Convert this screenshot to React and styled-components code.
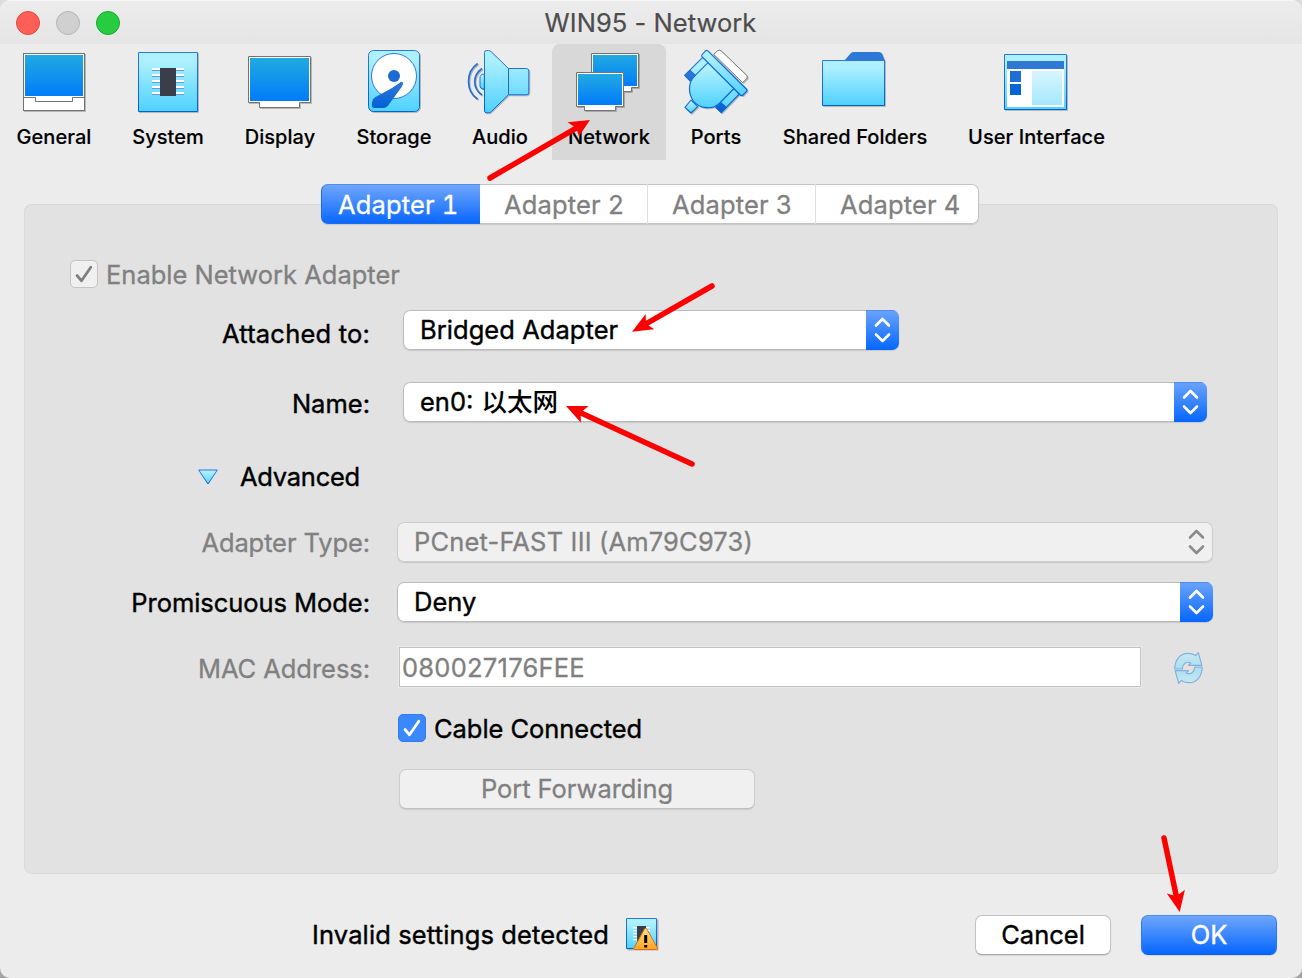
import React from "react";
import styled, { createGlobalStyle, css } from "styled-components";

const GlobalStyle = createGlobalStyle`
  * { box-sizing: border-box; }
  body {
    margin: 0;
    background: linear-gradient(#dcdcdc, #a2a2a2);
    font-family: Inter, "Noto Sans CJK SC", sans-serif;
  }
`;

const Window = styled.main`
  position: relative;
  display: flex;
  flex-direction: column;
  width: 1302px;
  height: 978px;
  overflow: hidden;
  border-radius: 10px;
  background: #ececec;
  color: #000;
  font-size: 25.5px;
  line-height: 32px;
  white-space: nowrap;
`;

const TitleBar = styled.header`
  display: grid;
  grid-template-columns: 1fr auto 1fr;
  align-items: center;
  height: 44px;
  padding: 1px 16px 0;
  border-top: 1px solid #f4f4f4;
  background: linear-gradient(#ececec, #e5e5e5);
`;

const Lights = styled.div`
  display: flex;
  gap: 16px;
`;

const Light = styled.span`
  width: 24px;
  height: 24px;
  border: 1px solid ${(p) => p.$edge};
  border-radius: 50%;
  background: ${(p) => p.$fill};
`;

const Title = styled.h1`
  margin: 0 1px 0 0;
  color: #4d4d4d;
  font-size: 25.5px;
  font-weight: 400;
  letter-spacing: 0.05px;
  -webkit-text-stroke: 0.2px;
`;

const Toolbar = styled.nav`
  display: flex;
  height: 116px;
`;

const Tool = styled.div`
  display: flex;
  flex-direction: column;
  align-items: center;
  width: ${(p) => p.$width}px;
  height: 116px;
  margin-left: ${(p) => p.$lead || 0}px;
  padding-top: 6px;
  border-radius: 8px 8px 0 0;
  background: ${(p) => (p.$active ? "#d8d8d8" : "transparent")};
`;

const ToolIcon = styled.svg`
  width: 64px;
  height: 64px;
  overflow: visible;
  filter: drop-shadow(1px 1px 0 rgba(0, 0, 0, 0.22));
`;

const ToolLabel = styled.span`
  margin-top: 11px;
  font-size: 20px;
  font-weight: 500;
  line-height: 24px;
  letter-spacing: 0.05px;
  -webkit-text-stroke: 0.15px;
`;

const Tabs = styled.div`
  z-index: 1;
  display: flex;
  align-self: flex-start;
  width: 658px;
  height: 40px;
  margin: 24px 0 -20px 321px;
  border-radius: 7px;
  background: #fff;
  box-shadow: inset 0 0 0 1px #c4c4c4, 0 1px 1px rgba(0, 0, 0, 0.12);
`;

const Tab = styled.div`
  display: flex;
  align-items: center;
  flex: none;
  width: ${(p) => p.$width}px;
  padding: 2px 0 0 ${(p) => p.$inset}px;
  border-left: 1px solid ${(p) => (p.$line ? "#e0e0e0" : "transparent")};
  color: #808080;
  font-feature-settings: "tnum";
  letter-spacing: 0.15px;
  -webkit-text-stroke: 0.3px;
  ${(p) =>
    p.$active &&
    css`
      border: 1px solid #1a6cf0;
      border-top-color: #4a8cf0;
      border-right: 0;
      border-radius: 7px 0 0 7px;
      background: linear-gradient(#6ea6fb, #0a67ff);
      color: #fff;
    `}
`;

const Panel = styled.section`
  width: 1254px;
  height: 670px;
  margin-left: 24px;
  padding-top: 56px;
  border-radius: 8px;
  background: #e2e2e2;
  box-shadow: inset 0 0 0 1px #dadada;
`;

const Row = styled.div`
  display: grid;
  grid-template-columns: 346px auto;
  justify-content: start;
  height: 40px;
  margin-top: ${(p) => p.$gap}px;
`;

const Label = styled.label`
  padding-top: ${(p) => 4 + (p.$drop || 0)}px;
  color: ${(p) => (p.$dim ? "#808080" : "#000")};
  text-align: right;
  letter-spacing: ${(p) => p.$track || 0}px;
  -webkit-text-stroke: ${(p) => (p.$dim ? 0.3 : 0.4)}px;
`;

const Combo = styled.div`
  display: flex;
  justify-content: space-between;
  width: ${(p) => p.$width}px;
  height: 40px;
  margin-left: ${(p) => p.$indent}px;
  overflow: hidden;
  border-radius: 7px;
  background: ${(p) => (p.$dim ? "#f0f0f0" : "#fff")};
  box-shadow: inset 0 0 0 1px ${(p) => (p.$dim ? "#cdcdcd" : "#bcbcbc")},
    0 1px 1px rgba(0, 0, 0, 0.12);
  color: ${(p) => (p.$dim ? "#808080" : "#000")};
`;

const ComboText = styled.span`
  padding: 4px 0 0 17px;
  letter-spacing: ${(p) => p.$track || 0}px;
  -webkit-text-stroke: ${(p) => (p.$dim ? 0.3 : 0.4)}px;
`;

const Han = styled.span`
  margin-left: 1px;
  font-family: "Noto Sans CJK SC", sans-serif;
  font-size: 25.5px;
  font-weight: 500;
  line-height: 20px;
  -webkit-text-stroke: 0;
`;

const Stepper = styled.svg`
  flex: none;
  width: 33px;
  height: 40px;
  background: ${(p) => (p.$dim ? "none" : "linear-gradient(#6ba4fb, #0566ff)")};
  box-shadow: ${(p) => (p.$dim ? "none" : "inset 0 1px 0 #4a8cf0")};
  color: ${(p) => (p.$dim ? "#8c8c8c" : "#fff")};
`;

const CheckRow = styled.div`
  display: flex;
  align-items: center;
  gap: 8px;
  height: 28px;
  margin-left: ${(p) => p.$indent}px;
  margin-top: ${(p) => p.$gap || 0}px;
  color: ${(p) => (p.$dim ? "#808080" : "#000")};
  -webkit-text-stroke: ${(p) => (p.$dim ? 0.3 : 0.4)}px;
`;

const CheckBox = styled.svg`
  width: 28px;
  height: 28px;
  border: 1px solid ${(p) => (p.$dim ? "#c4c4c4" : "#2f7cf6")};
  border-radius: 5px;
  background: ${(p) => (p.$dim ? "#f0f0f0" : "#3b88fd")};
  color: ${(p) => (p.$dim ? "#808080" : "#fff")};
`;

const CheckText = styled.span`
  padding-top: 2px;
  letter-spacing: ${(p) => p.$track || 0}px;
`;

const Disclosure = styled.div`
  display: flex;
  align-items: center;
  height: 40px;
  margin: 35px 0 0 174px;
  letter-spacing: -0.25px;
  -webkit-text-stroke: 0.4px;
`;

const DisclosureIcon = styled.svg`
  width: 20px;
  height: 16px;
  margin-right: 22px;
  overflow: visible;
`;

const MacField = styled.div`
  display: flex;
  align-items: center;
  gap: 33px;
  margin-left: 29px;
`;

const Field = styled.div`
  width: 742px;
  height: 40px;
  padding: 4px 0 0 2px;
  border: 1px solid #c2c2c2;
  background: #fff;
  box-shadow: 0 0 0 1px #ebebeb;
  color: #808080;
  letter-spacing: 0.25px;
  -webkit-text-stroke: 0.3px;
`;

const RefreshIcon = styled.svg`
  width: 29px;
  height: 32px;
  margin-top: 2px;
  overflow: visible;
`;

const Button = styled.div`
  display: flex;
  align-items: center;
  justify-content: center;
  width: ${(p) => p.$width}px;
  height: 40px;
  border: 1px solid #c2c2c2;
  border-bottom-color: #a8a8a8;
  border-radius: 7px;
  background: #fff;
  box-shadow: 0 1px 1px rgba(0, 0, 0, 0.1);
  -webkit-text-stroke: 0.4px;
  ${(p) =>
    p.$dim &&
    css`
      margin: 27px 0 0 375px;
      border-color: #cdcdcd;
      border-bottom-color: #bfbfbf;
      background: #f0f0f0;
      color: #808080;
      letter-spacing: -0.05px;
      -webkit-text-stroke: 0.3px;
    `}
  ${(p) =>
    p.$primary &&
    css`
      border-color: #4a8cf0 #2b79f2 #0a60ee;
      background: linear-gradient(#6ea6fb, #0566ff);
      color: #fff;
    `}
`;

const Footer = styled.footer`
  display: flex;
  align-items: center;
  height: 40px;
  margin: 41px 25px 0 312px;
`;

const Warning = styled.span`
  letter-spacing: 0.13px;
  -webkit-text-stroke: 0.4px;
`;

const WarningIcon = styled.svg`
  width: 32px;
  height: 32px;
  margin: -2px auto 0 17px;
  overflow: visible;
`;

const FooterButtons = styled.div`
  display: flex;
  gap: 30px;
`;

const Annotations = styled.svg`
  position: absolute;
  inset: 0;
  width: 1302px;
  height: 978px;
  pointer-events: none;
`;

const Defs = styled.svg`
  position: absolute;
  width: 0;
  height: 0;
`;

const SharedGradients = () => (
  <Defs>
    <linearGradient id="screen" x1="0" y1="0" x2="0" y2="1">
      <stop offset="0" stopColor="#22aae0" />
      <stop offset="1" stopColor="#007cfa" />
    </linearGradient>
    <linearGradient id="cyan" x1="0" y1="0" x2="0" y2="1">
      <stop offset="0.15" stopColor="#adf0ff" />
      <stop offset="1" stopColor="#4fd1ff" />
    </linearGradient>
    <linearGradient id="blue" x1="0" y1="0" x2="0" y2="1">
      <stop offset="0" stopColor="#2f78d6" />
      <stop offset="1" stopColor="#0062d6" />
    </linearGradient>
    <linearGradient id="pale" x1="0" y1="0" x2="0" y2="1">
      <stop offset="0" stopColor="#d8f6ff" />
      <stop offset="1" stopColor="#a6e7ff" />
    </linearGradient>
    <linearGradient id="amber" x1="0" y1="0" x2="0" y2="1">
      <stop offset="0" stopColor="#ffdf86" />
      <stop offset="1" stopColor="#ffa51e" />
    </linearGradient>
    <linearGradient id="faded" x1="0" y1="0" x2="0" y2="1">
      <stop offset="0" stopColor="#c8e9ef" />
      <stop offset="1" stopColor="#a6def2" />
    </linearGradient>
  </Defs>
);

const gray = { fill: "#fff", stroke: "#737373", strokeWidth: 1 };
const cyan = { fill: "url(#cyan)", stroke: "url(#blue)", strokeWidth: 1, strokeLinejoin: "round" };

const icons = {
  general: (
    <>
      <rect x="1.5" y="3.5" width="61" height="57" {...gray} />
      <rect x="3" y="5" width="58" height="41" fill="url(#screen)" />
      <path d="M1.5 47.5H13.5V51.5H50.5V47.5H62.5" {...gray} fill="none" />
    </>
  ),
  system: (
    <>
      <rect x="2.5" y="2.5" width="59" height="59" {...cyan} />
      {[18, 24, 30, 36, 42].map((y) => (
        <g key={y}>
          <rect x="16" y={y} width="32" height="2" fill="#fff" />
          <rect x="16" y={y + 2} width="32" height="1" fill="#5f9fda" />
        </g>
      ))}
      <rect x="24" y="18" width="16" height="28" fill="#393e4a" />
    </>
  ),
  display: (
    <>
      <path d="M.5 6.5H62.5V52.5H51.5V57.5H11.5V52.5H.5Z" {...gray} />
      <rect x="2" y="8" width="59" height="43" fill="url(#screen)" />
    </>
  ),
  storage: (
    <>
      <rect x="6.5" y=".5" width="51" height="61" rx="5" {...cyan} />
      <circle cx="32" cy="26" r="22.5" fill="#fff" stroke="#2f78d6" />
      <circle cx="32" cy="26" r="6" fill="#1a6cd4" />
      <path d="M40.8 32.2Q41.6 33.5 40 36.5L26.5 55Q24.5 58 21 58H12.5Q10 58 10 55.5V52Q10 49 13 47.2L30 38L38.5 32.3Q40 31.3 40.8 32.2Z" fill="url(#blue)" />
    </>
  ),
  audio: (
    <>
      <path d="M16.3 24C13 24 12 26 12 28V35.5C12 37.5 13 39.2 16.3 39.2Z" {...cyan} />
      <path d="M9.7 13.5C-2.5 22 -2.5 41 9.7 49.3" fill="none" stroke="#2470d4" strokeWidth="1.7" />
      <path d="M14 18.5C4.3 25.5 4.3 38 14 45" fill="none" stroke="#2470d4" strokeWidth="1.7" />
      <path d="M16.5 2.5Q16.5.5 18.5.5H20.5Q22 .5 23.5 2L40.5 18.5H58.5Q60.8 18.5 60.8 21V42.5Q60.8 44.8 58.5 44.8H40.5L23.5 61.3Q22 62.8 20.5 62.8H18.5Q16.5 62.8 16.5 60.8Z" {...cyan} />
      <path d="M40.5 18.5V44.8" stroke="#1a6cd4" />
    </>
  ),
  network: (
    <g transform="translate(-1 0)">
      <path d="M15.5 3.5H62.5V37.5H55.5V41.5H22.5V37.5H15.5Z" {...gray} />
      <rect x="17" y="5" width="44" height="31" fill="url(#screen)" />
      <path d="M.5 22.5H47.5V56.5H39.5V60.5H8.5V56.5H.5Z" {...gray} />
      <rect x="2" y="24" width="44" height="31" fill="url(#screen)" />
    </g>
  ),
  ports: (
    <g transform="translate(-4 -4) scale(.3333)" strokeWidth="3" strokeLinejoin="round">
      <path d="M101 25L113 14Q118 10 124 15L200 88Q204 93 200 98L188 110Z" fill="#fff" stroke="#737373" />
      <path d="M33 162L15 184L33 201L53 182Z" {...cyan} strokeWidth="3.5" />
      <path d="M68 34L14 88L31 105L86 50ZM178 144L124 200L107 184L162 127Z" {...cyan} strokeWidth="3.5" />
      <path d="M84 50L43 91C22 112 26 145 40 165C58 188 97 193 118 172L162 127Z" {...cyan} strokeWidth="3.5" />
      <path d="M30 72L14 88L30 104L47 88ZM124 170L108 185L124 200L140 184Z" fill="url(#blue)" stroke="#1767cf" strokeWidth="2.5" />
      <path d="M76 15Q80 11 84 15L199 129Q203 133 199 137L189 147Q185 150 181 147L67 33Q63 29 67 25Z" {...cyan} strokeWidth="3.5" />
    </g>
  ),
  folders: (
    <g transform="translate(-1 0)">
      <path d="M22 11L28.5 3.5Q29.5 2 31 2H57Q59 2 60 3.5L63 11Z" fill="#2f78d6" />
      <rect x=".5" y="10.5" width="62" height="45" {...cyan} />
    </g>
  ),
  interface: (
    <g transform="translate(-1 0)">
      <rect x=".5" y="4.5" width="62" height="55" {...cyan} />
      <rect x="3" y="11" width="57" height="46" fill="#fff" />
      <rect x="3" y="11" width="57" height="8" fill="#2f78d6" />
      <rect x="6" y="21" width="11" height="11" fill="#1d6fd5" />
      <rect x="6" y="34" width="11" height="11" fill="#0665d5" />
      <rect x="28" y="21" width="30" height="34" fill="url(#pale)" />
    </g>
  ),
};

const tools = [
  { name: "General", icon: "general", width: 108 },
  { name: "System", icon: "system", width: 120 },
  { name: "Display", icon: "display", width: 104 },
  { name: "Storage", icon: "storage", width: 108, lead: 8 },
  { name: "Audio", icon: "audio", width: 104 },
  { name: "Network", icon: "network", width: 114, active: true },
  { name: "Ports", icon: "ports", width: 100 },
  { name: "Shared Folders", icon: "folders", width: 178 },
  { name: "User Interface", icon: "interface", width: 185 },
];

const tabs = [
  { name: "Adapter 1", width: 159, inset: 16, active: true },
  { name: "Adapter 2", width: 167, inset: 23 },
  { name: "Adapter 3", width: 168, inset: 24, line: true },
  { name: "Adapter 4", width: 164, inset: 24, line: true },
];

const arrows = [
  { tail: [490, 178], tip: [590, 120], left: [567.5, 122.3], right: [579, 136.3] },
  { tail: [712, 286], tip: [632, 331.7], left: [645.7, 314], right: [654.3, 329.3] },
  { tail: [692, 464], tip: [566, 406], left: [588.5, 406], right: [581, 422.8] },
  { tail: [1164, 838], tip: [1179.7, 912], left: [1166.8, 893.5], right: [1184.9, 889.8] },
];

const Arrow = ({ tail, tip, left, right }) => {
  const len = Math.hypot(tip[0] - tail[0], tip[1] - tail[1]);
  const neck = [0, 1].map((i) => tip[i] - ((tip[i] - tail[i]) / len) * 16);
  return (
    <g fill="#ff0000" stroke="#ff0000">
      <path d={`M${tail}L${neck}`} strokeWidth="5.5" strokeLinecap="round" />
      <path d={`M${tip}L${left}L${neck}L${right}Z`} stroke="none" />
    </g>
  );
};

const ComboBox = ({ width, indent, dim, track, children }) => (
  <Combo $width={width} $indent={indent} $dim={dim}>
    <ComboText $track={track} $dim={dim}>
      {children}
    </ComboText>
    <Stepper $dim={dim} viewBox="0 0 33 40" fill="none" stroke="currentColor" strokeWidth="2.6" strokeLinecap="round" strokeLinejoin="round">
      <path d="M10 15.5L16.5 9L23 15.5M10 24.5L16.5 31L23 24.5" />
    </Stepper>
  </Combo>
);

const Check = ({ dim }) => (
  <CheckBox $dim={dim} viewBox="1 1 26 26" fill="none" stroke="currentColor" strokeWidth="2.8" strokeLinecap="round" strokeLinejoin="round">
    <path d="M7 15.5L11.5 20.8L20.8 7.2" />
  </CheckBox>
);

const refreshHalf =
  "M523 898C523 870 540 850 563 850C575 850 582 854 587 857L595 848L606 887H565L572 879C558 874 547 882 546 898Z";

export default function App() {
  return (
    <>
      <GlobalStyle />
      <Window>
        <SharedGradients />
        <TitleBar>
          <Lights>
            <Light $fill="#ff5f57" $edge="#e2463f" />
            <Light $fill="#d0d0d0" $edge="#b6b6b6" />
            <Light $fill="#28cc41" $edge="#14ab2a" />
          </Lights>
          <Title>WIN95 - Network</Title>
        </TitleBar>

        <Toolbar>
          {tools.map((t) => (
            <Tool key={t.name} $width={t.width} $lead={t.lead} $active={t.active}>
              <ToolIcon viewBox="0 0 64 64">{icons[t.icon]}</ToolIcon>
              <ToolLabel>{t.name}</ToolLabel>
            </Tool>
          ))}
        </Toolbar>

        <Tabs>
          {tabs.map((t) => (
            <Tab key={t.name} $width={t.width} $inset={t.inset} $line={t.line} $active={t.active}>
              {t.name}
            </Tab>
          ))}
        </Tabs>

        <Panel>
          <CheckRow $indent={46} $dim>
            <Check dim />
            <CheckText>Enable Network Adapter</CheckText>
          </CheckRow>
          <Row $gap={22}>
            <Label $drop={4} $track={0.2}>Attached to:</Label>
            <ComboBox width={496} indent={33} track={0.05}>Bridged Adapter</ComboBox>
          </Row>
          <Row $gap={32}>
            <Label $drop={2} $track={0}>Name:</Label>
            <ComboBox width={804} indent={33}>
              en0: <Han>以太网</Han>
            </ComboBox>
          </Row>
          <Disclosure>
            <DisclosureIcon viewBox="0 0 20 16">
              <path d="M.7 1H19.3L10 15Z" {...cyan} />
            </DisclosureIcon>
            Advanced
          </Disclosure>
          <Row $gap={25}>
            <Label $drop={1} $track={-0.1} $dim>Adapter Type:</Label>
            <ComboBox width={816} indent={27} track={0.17} dim>PCnet-FAST III (Am79C973)</ComboBox>
          </Row>
          <Row $gap={20}>
            <Label $drop={1} $track={-0.05}>Promiscuous Mode:</Label>
            <ComboBox width={816} indent={27}>Deny</ComboBox>
          </Row>
          <Row $gap={25}>
            <Label $drop={2} $track={-0.05} $dim>MAC Address:</Label>
            <MacField>
              <Field>080027176FEE</Field>
              <RefreshIcon viewBox="521 846 88 98">
                <g fill="url(#faded)" stroke="#83aee0" strokeWidth="3.5" strokeLinejoin="round">
                  <path d={refreshHalf} />
                  <path d={refreshHalf} transform="rotate(180 565 895)" />
                </g>
              </RefreshIcon>
            </MacField>
          </Row>
          <CheckRow $indent={374} $gap={27}>
            <Check />
            <CheckText $track={-0.05}>Cable Connected</CheckText>
          </CheckRow>
          <Button $width={356} $dim>Port Forwarding</Button>
        </Panel>

        <Footer>
          <Warning>Invalid settings detected</Warning>
          <WarningIcon viewBox="0 0 32 32">
            <rect x="1.5" y="1.5" width="31" height="31" fill="#b5b5b5" />
            <rect x=".5" y=".5" width="30" height="30" {...cyan} />
            {[9, 12, 15, 18, 21].map((y) => (
              <rect key={y} x="7" y={y} width="17" height="1.3" fill="#fff" />
            ))}
            <rect x="11" y="8" width="9" height="15" fill="#393e4a" />
            <path d="M19.7 10.3Q20.5 10.3 21 11.2L31.5 30.2Q31.8 31.5 30.8 31.5H8.6Q7.5 31.5 7.9 30.2L18.4 11.2Q18.9 10.3 19.7 10.3Z" fill="url(#amber)" stroke="#dd6a1f" />
            <path d="M18.2 17H21.2V25H18.2ZM18.2 27H21.2V29.6H18.2Z" fill="#000" />
          </WarningIcon>
          <FooterButtons>
            <Button $width={136}>Cancel</Button>
            <Button $width={136} $primary>OK</Button>
          </FooterButtons>
        </Footer>

        <Annotations viewBox="0 0 1302 978">
          {arrows.map((a) => (
            <Arrow key={a.tail[0]} {...a} />
          ))}
        </Annotations>
      </Window>
    </>
  );
}
